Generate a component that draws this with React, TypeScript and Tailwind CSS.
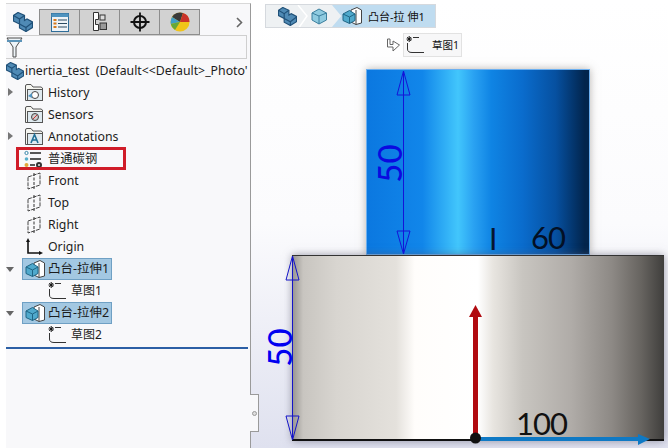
const sans = "font-['Noto_Sans','Noto_Sans_CJK_SC',sans-serif]";

function Block({ size = 20 }: { size?: number }) {
  return (
    <svg width={size} height={size} viewBox="0 0 20 20">
      <path d="M5 0.500 L11.500 3.500 L11.500 8.500 L14 7 L19.500 10 L19.500 15.500 L13 19.500 L6.500 16 L6.500 12 L0.500 9 L0.500 3.500 Z" fill="#4f8ab5" stroke="#1f5078" strokeWidth="1.200" />
      <path d="M0.500 3.500 L6.500 7 L11.500 3.500 M6.500 7 L6.500 12 M6.500 12 L13 15.500 L19.500 10.500 M13 15.500 L13 19.500" fill="none" stroke="#1f5078" strokeWidth="1.200" />
    </svg>
  );
}

function Folder({ children }: { children: React.ReactNode }) {
  return (
    <svg width="18" height="18" viewBox="0 0 18 18">
      <path d="M0.500 16.500 L0.500 2 Q0.500 0.500 2 0.500 L6 0.500 L8 3 L16 3 L17.500 4 L17.500 16.500 Z" fill="#f5f5f0" stroke="#555" />
      <rect x="2.500" y="5.500" width="15" height="11" fill="#dfeaf0" stroke="#555" />
      {children}
    </svg>
  );
}

function PlaneIcon() {
  return (
    <svg width="14" height="18" viewBox="0 0 14 18">
      <path d="M1 5 L13 1 L13 13 L1 17 Z" fill="none" stroke="#444" strokeDasharray="4 1" />
      <path d="M7 1 L7 17" stroke="#333" strokeDasharray="3 1.500" />
    </svg>
  );
}

function ExtrudeIcon() {
  return (
    <svg width="20" height="18" viewBox="0 0 20 18">
      <path d="M9 3 L15 0.500 L19.500 3 L19.500 16 L14 17.500 L9 15 Z" fill="#fff" stroke="#444" />
      <path d="M14 3 L14 17.500" stroke="#444" />
      <path d="M1 7 L7.500 3.500 L13 7 L13 13.500 L7.500 16.500 L1 13.500 Z" fill="#4fa9cc" stroke="#1f6585" />
      <path d="M1 7 L7.500 10 L13 7 M7.500 10 L7.500 16.500" fill="none" stroke="#1f6585" />
    </svg>
  );
}

function SketchIcon({ w = 20, h = 18 }: { w?: number; h?: number }) {
  return (
    <svg width={w} height={h} viewBox="0 0 20 18">
      <path d="M7 1.500 L13 1.500 M1.500 7 L1.500 13 Q1.500 16.500 6 16.500 L18 16.500" fill="none" stroke="#333" strokeWidth="1" />
      <path d="M0.500 3 L6 3 M3.200 0 L3.200 6 M1.200 1 L5.200 5 M5.200 1 L1.200 5" stroke="#111" strokeWidth="1" />
    </svg>
  );
}

function TreeRow({
  icon,
  label,
  arrow,
  indent = 18,
}: {
  icon: React.ReactNode;
  label: string;
  arrow?: "right" | "down";
  indent?: number;
}) {
  return (
    <div className="flex h-[22px] items-center relative">
      {arrow === "right" && (
        <div className="absolute left-[2px] top-[6px] w-0 h-0 border-y-[4px] border-y-transparent border-l-[5px] border-l-[#777]" />
      )}
      <div className="flex items-center gap-[4px]" style={{ marginLeft: indent }}>
        <div className="w-[20px] flex justify-center">{icon}</div>
        <span className="text-[12.3px] text-[#1c1c1c] leading-none">{label}</span>
      </div>
    </div>
  );
}

function FeatureRow({ label }: { label: string }) {
  return (
    <div className="flex h-[22px] items-center relative">
      <div className="absolute left-[0px] top-[9px] w-0 h-0 border-x-[4px] border-x-transparent border-t-[5px] border-t-[#666]" />
      <div className="ml-[16px] flex h-[22px] w-[90px] items-center gap-[3px] bg-[#a3c8e2] border border-[#6fa0c4] pl-[2px]">
        <ExtrudeIcon />
        <span className="text-[12.500px] text-[#1c1c1c] leading-none whitespace-nowrap">{label}</span>
      </div>
    </div>
  );
}

function SubRow({ label }: { label: string }) {
  return (
    <div className="flex h-[22px] items-center ml-[42px] gap-[3px]">
      <SketchIcon />
      <span className="text-[12px] text-[#1c1c1c] leading-none">{label}</span>
    </div>
  );
}

function Tab({ active, children }: { active?: boolean; children: React.ReactNode }) {
  return (
    <div
      className={
        active
          ? "w-[34px] h-[26px] flex items-center justify-center border-r border-[#8d8d8d] bg-[#f8f8fa]"
          : "w-[40px] h-[26px] flex items-center justify-center border-r border-b border-t border-[#8d8d8d] bg-[#d2d2d2]"
      }
    >
      {children}
    </div>
  );
}

function Sidebar() {
  return (
    <div className="w-[251px] h-full shrink-0 bg-white pl-[6px] pt-[3px]">
      <div className="h-full bg-[#f8f8fa] border-r border-t border-[#9a9a9a] border-t-[#d8d8d8] pt-[5px] flex flex-col">
        <div className="flex items-center h-[26px] relative">
          <Tab active>
            <Block size={20} />
          </Tab>
          <Tab>
            <svg width="18" height="19" viewBox="0 0 18 19">
              <rect x="0.500" y="0.500" width="17" height="18" fill="#eef3f7" stroke="#2f6d99" />
              <rect x="0.500" y="0.500" width="17" height="3.500" fill="#4f93bf" />
              <path d="M2.500 7h3M2.500 10.500h3M2.500 14h3" stroke="#d67a1f" strokeWidth="1.800" />
              <path d="M7 7h9M7 10.500h9M7 14h9" stroke="#2a4a60" />
            </svg>
          </Tab>
          <Tab>
            <svg width="16" height="20" viewBox="0 0 16 20">
              <path d="M1.500 0.500h5v7H3.500v5h3v6h-5Z" fill="#fff" stroke="#333" />
              <rect x="8" y="3" width="5" height="5" fill="#ddd" stroke="#333" />
              <rect x="8" y="11" width="6.500" height="6.500" fill="#999" stroke="#333" />
            </svg>
          </Tab>
          <Tab>
            <svg width="20" height="20" viewBox="0 0 20 20">
              <circle cx="10" cy="10" r="6" fill="none" stroke="#111" strokeWidth="2" />
              <path d="M10 0.500v19M0.500 10h19" stroke="#111" strokeWidth="1.800" />
            </svg>
          </Tab>
          <Tab>
            <svg width="20" height="20" viewBox="0 0 20 20">
              <circle cx="10" cy="10" r="9.500" fill="#f0c419" />
              <path d="M10 10 L2 5 A9.500 9.500 0 0 1 13 1 Z" fill="#3a3a3a" />
              <path d="M10 10 L13 1 A9.500 9.500 0 0 1 19.500 10 Z" fill="#c9322a" />
              <path d="M10 10 L0.800 12 A9.500 9.500 0 0 1 2 5 Z" fill="#3f9ec9" />
              <path d="M10 10 L5 18 A9.500 9.500 0 0 1 0.800 12 Z" fill="#66a83a" />
            </svg>
          </Tab>
          <svg className="absolute left-[230px] top-[8px]" width="7" height="11" viewBox="0 0 7 11">
            <path d="M1 1 L5.500 5.500 L1 10" fill="none" stroke="#666" strokeWidth="1.600" />
          </svg>
        </div>
        <div className="h-[24px] mr-[3px] border border-[#cfcfcf] border-l-0 relative">
          <svg className="absolute left-0 top-[1px]" width="18" height="22" viewBox="0 0 18 22">
            <path d="M1 1 L16 1 L10 10 L10 20 L7 20 L7 10 Z" fill="#eef4f8" stroke="#4d4d4d" />
            <path d="M1 4 L16 4" stroke="#5b93b8" strokeWidth="2" />
          </svg>
        </div>
        <div className={`${sans} pt-[1px]`}>
          <div className="flex h-[22px] items-center gap-[1px] whitespace-nowrap overflow-hidden mr-[2px]">
            <Block size={18} />
            <span className="text-[12.300px] text-[#1c1c1c] leading-none">inertia_test&nbsp;&nbsp;(Default&lt;&lt;Default&gt;_Photo'</span>
          </div>
          <TreeRow
            arrow="right"
            label="History"
            icon={
              <Folder>
                <circle cx="10" cy="11" r="3.500" fill="#fff" stroke="#444" />
                <path d="M3 12 L7 9 L7 14 Z" fill="#4f93bf" />
              </Folder>
            }
          />
          <TreeRow
            label="Sensors"
            icon={
              <Folder>
                <circle cx="10" cy="11" r="3.500" fill="#ccc" stroke="#444" />
                <path d="M8 13 L12 9" stroke="#c33" />
              </Folder>
            }
          />
          <TreeRow
            arrow="right"
            label="Annotations"
            icon={
              <Folder>
                <path d="M6 15 L9.500 6.500 L13 15 M7.500 12 L11.500 12" fill="none" stroke="#1f6f96" strokeWidth="1.600" />
              </Folder>
            }
          />
          <div className="relative">
            <TreeRow
              label="普通碳钢"
              icon={
                <svg width="20" height="18" viewBox="0 0 20 18">
                  <circle cx="2.500" cy="3" r="1.600" fill="#fff" stroke="#3a87a8" />
                  <circle cx="2.500" cy="9" r="1.800" fill="#58aecb" />
                  <circle cx="2.500" cy="15" r="2" fill="#e0a63a" />
                  <path d="M6 3h11M6 9h11M6 15h5" stroke="#222" strokeWidth="1.600" />
                  <circle cx="15" cy="15" r="3" fill="#333" />
                  <circle cx="15" cy="15" r="1" fill="#eee" />
                </svg>
              }
            />
            <div className="absolute left-[10px] top-[-1px] w-[110px] h-[23px] border-[3px] border-[#d01c28]" />
          </div>
          <TreeRow label="Front" icon={<PlaneIcon />} />
          <TreeRow label="Top" icon={<PlaneIcon />} />
          <TreeRow label="Right" icon={<PlaneIcon />} />
          <TreeRow
            label="Origin"
            icon={
              <svg width="18" height="18" viewBox="0 0 18 18">
                <path d="M3 2 L3 15 L16 15" fill="none" stroke="#111" strokeWidth="1.600" />
                <path d="M3 0 L1 4 L5 4 Z M18 15 L14 13 L14 17 Z" fill="#111" />
              </svg>
            }
          />
          <FeatureRow label="凸台-拉伸1" />
          <SubRow label="草图1" />
          <FeatureRow label="凸台-拉伸2" />
          <SubRow label="草图2" />
          <div className="h-[2px] bg-[#2c5fa5] mt-[1px] mr-[2px]" />
        </div>
      </div>
    </div>
  );
}

function Breadcrumb() {
  return (
    <div className={`${sans} pt-[4px] pl-[14px] flex flex-col`}>
      <div className="flex h-[24px] w-[171px] items-center border border-[#d5d9de] bg-[#eef1f3] relative overflow-hidden">
        <div className="absolute right-0 top-0 h-full w-[103px] bg-[#bfdcf0]" style={{ clipPath: "polygon(0 0,100% 0,100% 100%,0 100%,9% 50%)" }} />
        <svg className="absolute left-[31px] top-0" width="12" height="24" viewBox="0 0 12 24">
          <path d="M1 0 L10 11 L1 24" fill="none" stroke="#ffffff" strokeWidth="1.500" />
        </svg>
        <div className="relative ml-[12px]"><Block size={19} /></div>
        <div className="relative ml-[14px] w-[17px] h-[17px]">
          <svg width="17" height="17" viewBox="0 0 17 17">
            <path d="M1 5 L8 1 L15.500 5 L15.500 12 L8 16 L1 12 Z" fill="#8fcbe0" stroke="#3b7f9e" />
            <path d="M1 5 L8 8 L15.500 5 M8 8 L8 16" fill="none" stroke="#3b7f9e" />
          </svg>
        </div>
        <div className="relative ml-[14px]"><ExtrudeIcon /></div>
        <span className="relative ml-[6px] text-[11px] text-[#111] leading-none whitespace-nowrap">凸台-拉 伸1</span>
      </div>
      <div className="flex items-center ml-[121px] mt-[5px]">
        <svg width="14" height="15" viewBox="0 0 14 15">
          <path d="M1.500 1 L1.500 9 L7 9 L7 13 L13.500 7 L7 3 L7 6.500 L4 6.500 L4 1 Z" fill="#fff" stroke="#666" />
        </svg>
        <div className="ml-[3px] flex h-[24px] w-[59px] items-center gap-[6px] border border-[#e2e2e2] bg-[#f7f7f8] pl-[2px]">
          <SketchIcon w={20} h={18} />
          <span className="text-[10.500px] text-[#111] leading-none whitespace-nowrap">草图1</span>
        </div>
      </div>
    </div>
  );
}

function Model() {
  const dim = "font-['Lato',sans-serif] leading-none absolute";
  return (
    <>
      {/* upper cylinder */}
      <div
        className="absolute left-[115px] top-[69px] w-[224px] h-[186px] border border-[#6db0f0] shadow-[0_0_8px_rgba(120,110,100,0.5)]"
        style={{
          background:
            "linear-gradient(90deg,#0b78e0 0%,#1186ea 25%,#42c6fc 41%,#2aa2f2 48%,#0f84e4 56%,#0a6ccd 70%,#0650a0 85%,#02254d 98%)",
        }}
      />
      {/* lower cylinder */}
      <div
        className="absolute left-[41px] top-[255px] w-[372px] h-[186px] border-t border-[#333] border-b-2 border-b-[#111] shadow-[0_0_8px_rgba(90,90,110,0.6)]"
        style={{
          background:
            "linear-gradient(90deg,#96938f 0%,#c8c5c0 3%,#d8d5d0 12%,#e4e1dc 28%,#fffdfb 33%,#ffffff 50%,#e8e5e0 54%,#c8c5c0 62%,#b0aca8 75%,#8d8985 86%,#66635f 94%,#3f3e3c 100%)",
        }}
      />
      <svg className="absolute left-0 top-0" width="418" height="448" viewBox="0 0 418 448">
        {/* upper dimension */}
        <path d="M152.500 71 L152.500 254" stroke="#1414d8" strokeWidth="1" />
        <path d="M152.500 71 L146 95 L159 95 Z M152.500 254 L146 231 L159 231 Z" fill="none" stroke="#1414d8" />
        {/* lower dimension */}
        <path d="M41.500 256 L41.500 440" stroke="#1414c8" strokeWidth="1" />
        <path d="M41.500 256 L35 280 L48 280 Z M41.500 440 L35 416 L48 416 Z" fill="none" stroke="#1414c8" />
        {/* axes */}
        <path d="M224.500 438 L224.500 316" stroke="#b10a10" strokeWidth="5" />
        <path d="M224.500 305 L218 317 L231 317 Z" fill="#b10a10" />
        <path d="M226 439 L388 439" stroke="#0f79c4" strokeWidth="4" />
        <path d="M399 439 L387 434 L387 445 Z" fill="#0f79c4" />
        <circle cx="224.500" cy="438" r="5.500" fill="#111" />
      </svg>
      <span className={`${dim} left-[118px] top-[147px] text-[33px] font-medium text-[#0a0ae0] -rotate-90 w-[40px] text-center`}>50</span>
      <span className={`${dim} left-[8px] top-[331px] text-[33px] font-medium text-[#0000f0] -rotate-90 w-[40px] text-center`}>50</span>
      <span className={`${dim} left-[238px] top-[223px] text-[30px] font-normal text-[#071530]`}>I</span>
      <span className={`${dim} left-[280px] top-[222px] text-[31px] font-normal tracking-[-1px] text-[#031025]`}>60</span>
      <span className={`${dim} left-[265px] top-[408px] text-[31px] font-normal tracking-[-1px] text-[#111]`}>100</span>
    </>
  );
}

export default function App() {
  return (
    <div className="flex w-[668px] h-[448px] overflow-hidden bg-white">
      <Sidebar />
      <div className="relative flex-1 h-full bg-gradient-to-b from-[#ffffff] via-[#fbfbfd] to-[#dfe1ef]">
        <Breadcrumb />
        <Model />
        <div className="absolute left-[-1px] top-[394px] w-[9px] h-[38px] border border-l-0 border-[#9a9a9a] bg-[#f8f8fa] flex items-center justify-center">
          <div className="w-[5px] h-[5px] rounded-full border border-[#999] bg-[#ddd]" />
        </div>
      </div>
    </div>
  );
}
